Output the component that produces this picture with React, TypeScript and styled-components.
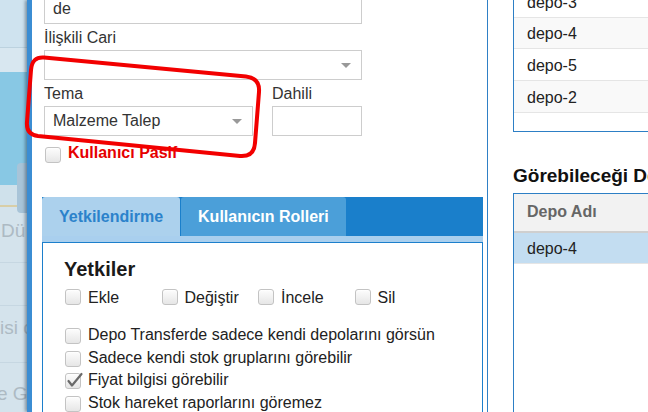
import React from "react";
import styled, { createGlobalStyle } from "styled-components";

const GlobalStyle = createGlobalStyle`
  *, *::before, *::after { box-sizing: border-box; }
  html, body { margin: 0; padding: 0; background: #fff; }
  body {
    width: 648px;
    height: 412px;
    overflow: hidden;
    font-family: "Liberation Sans", Arial, sans-serif;
    font-size: 16px;
    color: #333;
  }
`;

const Screen = styled.div`
  position: relative;
  display: flex;
  width: 648px;
  height: 412px;
  overflow: hidden;
`;

/* ---------- dimmed page behind the modal ---------- */
const Backdrop = styled.div`
  position: relative;
  flex: none;
  width: 27px;
  display: flex;
  flex-direction: column;
  overflow: hidden;
`;

const Band = styled.div<{ $h: number; $bg: string; $line?: string; $pad?: number; $indent?: number }>`
  flex: none;
  height: ${(p) => p.$h}px;
  background: ${(p) => p.$bg};
  border-bottom: ${(p) => (p.$line ? `1px solid ${p.$line}` : "0")};
  padding-top: ${(p) => p.$pad ?? 0}px;
  text-indent: ${(p) => p.$indent ?? 0}px;
  font-size: 19px;
  line-height: 22px;
  color: #adbac3;
  white-space: nowrap;
`;

const BackButton = styled.div`
  position: absolute;
  left: 17px;
  top: 163px;
  width: 16px;
  height: 50px;
  border-radius: 4px;
  background: #a8c4d8;
`;

/* ---------- modal ---------- */
const Modal = styled.div`
  flex: 1;
  min-width: 0;
  display: flex;
  background: #fff;
  border-left: 5px solid #3b8dd3;
  box-shadow: -2px 0 3px rgba(30, 50, 70, 0.45);
  z-index: 1;
`;

const LeftPane = styled.div`
  flex: none;
  width: 456px;
  padding: 0 4px 0 10px;
  border-right: 1px solid #2f80c6;
  display: flex;
  flex-direction: column;
`;

const Form = styled.div`
  margin-top: -6px;
  padding-left: 2px;
  width: 320px;
  display: flex;
  flex-direction: column;
`;

const TextInput = styled.div`
  height: 30px;
  border: 1px solid #cdcdcd;
  padding: 0 8px;
  display: flex;
  align-items: center;
  color: #333;
`;

const Label = styled.div`
  line-height: 20px;
  margin: 4px 0 2px;
  color: #333;
  white-space: nowrap;
`;

const FieldRow = styled.div`
  display: flex;
  gap: 19px;
`;

const Field = styled.div<{ $w: number }>`
  width: ${(p) => p.$w}px;
  display: flex;
  flex-direction: column;
`;

const Select = styled.div`
  height: 30px;
  border: 1px solid #cdcdcd;
  padding: 0 10px 0 8px;
  display: flex;
  align-items: center;
  justify-content: space-between;
  color: #333;
`;

const Caret = styled.span`
  width: 0;
  height: 0;
  border-left: 5px solid transparent;
  border-right: 5px solid transparent;
  border-top: 5px solid #999;
`;

const CheckRow = styled.div`
  margin-top: 8px;
  padding-left: 1px;
  display: flex;
  align-items: flex-start;
  gap: 7px;
  line-height: 18px;
`;

const DangerText = styled.span`
  color: #e60000;
  font-weight: bold;
`;

const Box = styled.span<{ $offset?: number }>`
  position: relative;
  flex: none;
  width: 16px;
  height: 16px;
  margin-top: ${(p) => p.$offset ?? 0}px;
  border: 1px solid #c3c3c3;
  border-radius: 3px;
  background: linear-gradient(#fdfdfd, #e6e6e6);
  box-shadow: inset 0 1px 1px rgba(255, 255, 255, 0.8);
`;

const Tick = styled.svg`
  position: absolute;
  left: 1px;
  top: -2px;
  width: 16px;
  height: 16px;
  overflow: visible;
`;

const CheckBox = ({ checked, offset }: { checked?: boolean; offset?: number }) => (
  <Box $offset={offset}>
    {checked && (
      <Tick viewBox="0 0 16 16">
        <path d="M1.5 9 L5 13.5 L14.5 2" fill="none" stroke="#6a6a6a" strokeWidth="2.2" strokeLinecap="round" strokeLinejoin="round" />
      </Tick>
    )}
  </Box>
);

/* ---------- tabs ---------- */
const Tabs = styled.div`
  margin-top: 34px;
  width: 441px;
  flex: 1;
  display: flex;
  flex-direction: column;
`;

const TabBar = styled.div`
  height: 39px;
  flex: none;
  display: flex;
  gap: 1px;
  background: #1a7fcb;
`;

const Tab = styled.div<{ $active?: boolean }>`
  padding: 0 17px;
  display: flex;
  align-items: center;
  font-weight: bold;
  white-space: nowrap;
  border-radius: 3px 3px 0 0;
  background: ${(p) => (p.$active ? "#acd1ed" : "#4b9fd9")};
  color: ${(p) => (p.$active ? "#2b82cb" : "#fff")};
`;

const TabStrip = styled.div`
  height: 6px;
  flex: none;
  background: #a9cfee;
`;

const TabBody = styled.div`
  flex: 1;
  border: 1px solid #1c7fcc;
  padding: 14px 0 0 22px;
`;

const SectionTitle = styled.h3`
  margin: 0 0 0 -1px;
  font-size: 20px;
  line-height: 24px;
  font-weight: bold;
  color: #1a1a1a;
`;

const PermGrid = styled.div`
  margin-top: 8px;
  display: grid;
  grid-template-columns: repeat(4, 96.5px);
`;

const CheckItem = styled.label<{ $h?: number }>`
  display: flex;
  align-items: flex-start;
  gap: 7px;
  line-height: 18px;
  height: ${(p) => (p.$h ? `${p.$h}px` : "auto")};
  color: #222;
  white-space: nowrap;
`;

const OptionList = styled.div`
  margin-top: 19px;
  display: flex;
  flex-direction: column;
`;

/* ---------- right column ---------- */
const RightPane = styled.div`
  flex: none;
  width: 400px;
  padding-left: 25px;
  display: flex;
  flex-direction: column;
`;

const DataBox = styled.div<{ $grow?: boolean; $top?: number }>`
  width: 300px;
  margin-top: ${(p) => p.$top ?? 0}px;
  border: 1px solid #2d7fc5;
  border-bottom: ${(p) => (p.$grow ? "0" : "1px solid #2d7fc5")};
  flex: ${(p) => (p.$grow ? 1 : "none")};
  display: flex;
  flex-direction: column;
`;

const DataRow = styled.div<{ $alt?: boolean; $selected?: boolean }>`
  height: ${(p) => (p.$selected ? "31px" : "31.67px")};
  flex: none;
  padding: 3px 13px 0;
  display: flex;
  align-items: center;
  border-bottom: 1px solid #e5e5e5;
  background: ${(p) => (p.$selected ? "#c3ddf1" : p.$alt ? "#f9f9f9" : "#fff")};
  color: #222;
`;

const Filler = styled.div`
  height: 18px;
  flex: none;
`;

const HeaderRow = styled.div`
  height: 39px;
  flex: none;
  padding: 0 13px;
  display: flex;
  align-items: center;
  background: #f2f2f2;
  border-bottom: 2px solid #cfcfcf;
  font-weight: bold;
  color: #666;
`;

const PanelTitle = styled.h4`
  margin: 33px 0 6px;
  font-size: 19px;
  line-height: 22px;
  font-weight: bold;
  color: #111;
  white-space: nowrap;
`;

/* ---------- hand-drawn annotation ---------- */
const Annotation = styled.svg`
  position: absolute;
  left: 0;
  top: 0;
  width: 648px;
  height: 412px;
  pointer-events: none;
  z-index: 5;
`;

export default function App() {
  return (
    <>
      <GlobalStyle />
      <Screen>
        <Backdrop>
          <Band $h={48} $bg="#cfe3ef" $line="#bcd2df" />
          <Band $h={24} $bg="#d8e7f0" />
          <Band $h={113} $bg="#88c8e4" />
          <Band $h={20} $bg="#cfe1eb" />
          <Band $h={2} $bg="#d8cea7" />
          <Band $h={56} $bg="#d4e3ec" $line="#c6d7e2" $pad={12.7} $indent={1}>
            Dü
          </Band>
          <Band $h={43} $bg="#d4e3ec" $line="#c6d7e2" />
          <Band $h={57} $bg="#d4e3ec" $line="#c6d7e2" $pad={10.7} $indent={0}>
            isi c
          </Band>
          <Band $h={60} $bg="#d4e3ec" $pad={20.4} $indent={-3}>
            e Gr
          </Band>
          <BackButton />
        </Backdrop>

        <Modal>
          <LeftPane>
            <Form>
              <TextInput>de</TextInput>
              <Label>İlişkili Cari</Label>
              <Select>
                <span />
                <Caret />
              </Select>
              <FieldRow>
                <Field $w={209}>
                  <Label>Tema</Label>
                  <Select>
                    <span>Malzeme Talep</span>
                    <Caret />
                  </Select>
                </Field>
                <Field $w={90}>
                  <Label>Dahili</Label>
                  <TextInput />
                </Field>
              </FieldRow>
              <CheckRow>
                <CheckBox offset={3} />
                <DangerText>Kullanıcı Pasif</DangerText>
              </CheckRow>
            </Form>

            <Tabs>
              <TabBar>
                <Tab $active>Yetkilendirme</Tab>
                <Tab>Kullanıcın Rolleri</Tab>
              </TabBar>
              <TabStrip />
              <TabBody>
                <SectionTitle>Yetkiler</SectionTitle>
                <PermGrid>
                  {["Ekle", "Değiştir", "İncele", "Sil"].map((t) => (
                    <CheckItem key={t}>
                      <CheckBox />
                      <span>{t}</span>
                    </CheckItem>
                  ))}
                </PermGrid>
                <OptionList>
                  {[
                    { t: "Depo Transferde sadece kendi depolarını görsün" },
                    { t: "Sadece kendi stok gruplarını görebilir" },
                    { t: "Fiyat bilgisi görebilir", c: true },
                    { t: "Stok hareket raporlarını göremez" },
                  ].map((o) => (
                    <CheckItem key={o.t} $h={22.67}>
                      <CheckBox offset={2} checked={o.c} />
                      <span>{o.t}</span>
                    </CheckItem>
                  ))}
                </OptionList>
              </TabBody>
            </Tabs>
          </LeftPane>

          <RightPane>
            <DataBox $top={-15}>
              <DataRow>depo-3</DataRow>
              <DataRow $alt>depo-4</DataRow>
              <DataRow>depo-5</DataRow>
              <DataRow $alt>depo-2</DataRow>
              <Filler />
            </DataBox>
            <PanelTitle>Görebileceği Depolar</PanelTitle>
            <DataBox $grow>
              <HeaderRow>Depo Adı</HeaderRow>
              <DataRow $selected>depo-4</DataRow>
            </DataBox>
          </RightPane>
        </Modal>

        <Annotation viewBox="0 0 648 412">
          <path
            d="M44 57.5 L246 76.5 Q260 78 259 92 L255 143 Q254 157 240 156 L38 136 Q26 134.5 27 122 L31 70 Q32 56.5 44 57.5 Z"
            fill="none"
            stroke="#f20000"
            strokeWidth="4"
            strokeLinejoin="round"
          />
        </Annotation>
      </Screen>
    </>
  );
}
